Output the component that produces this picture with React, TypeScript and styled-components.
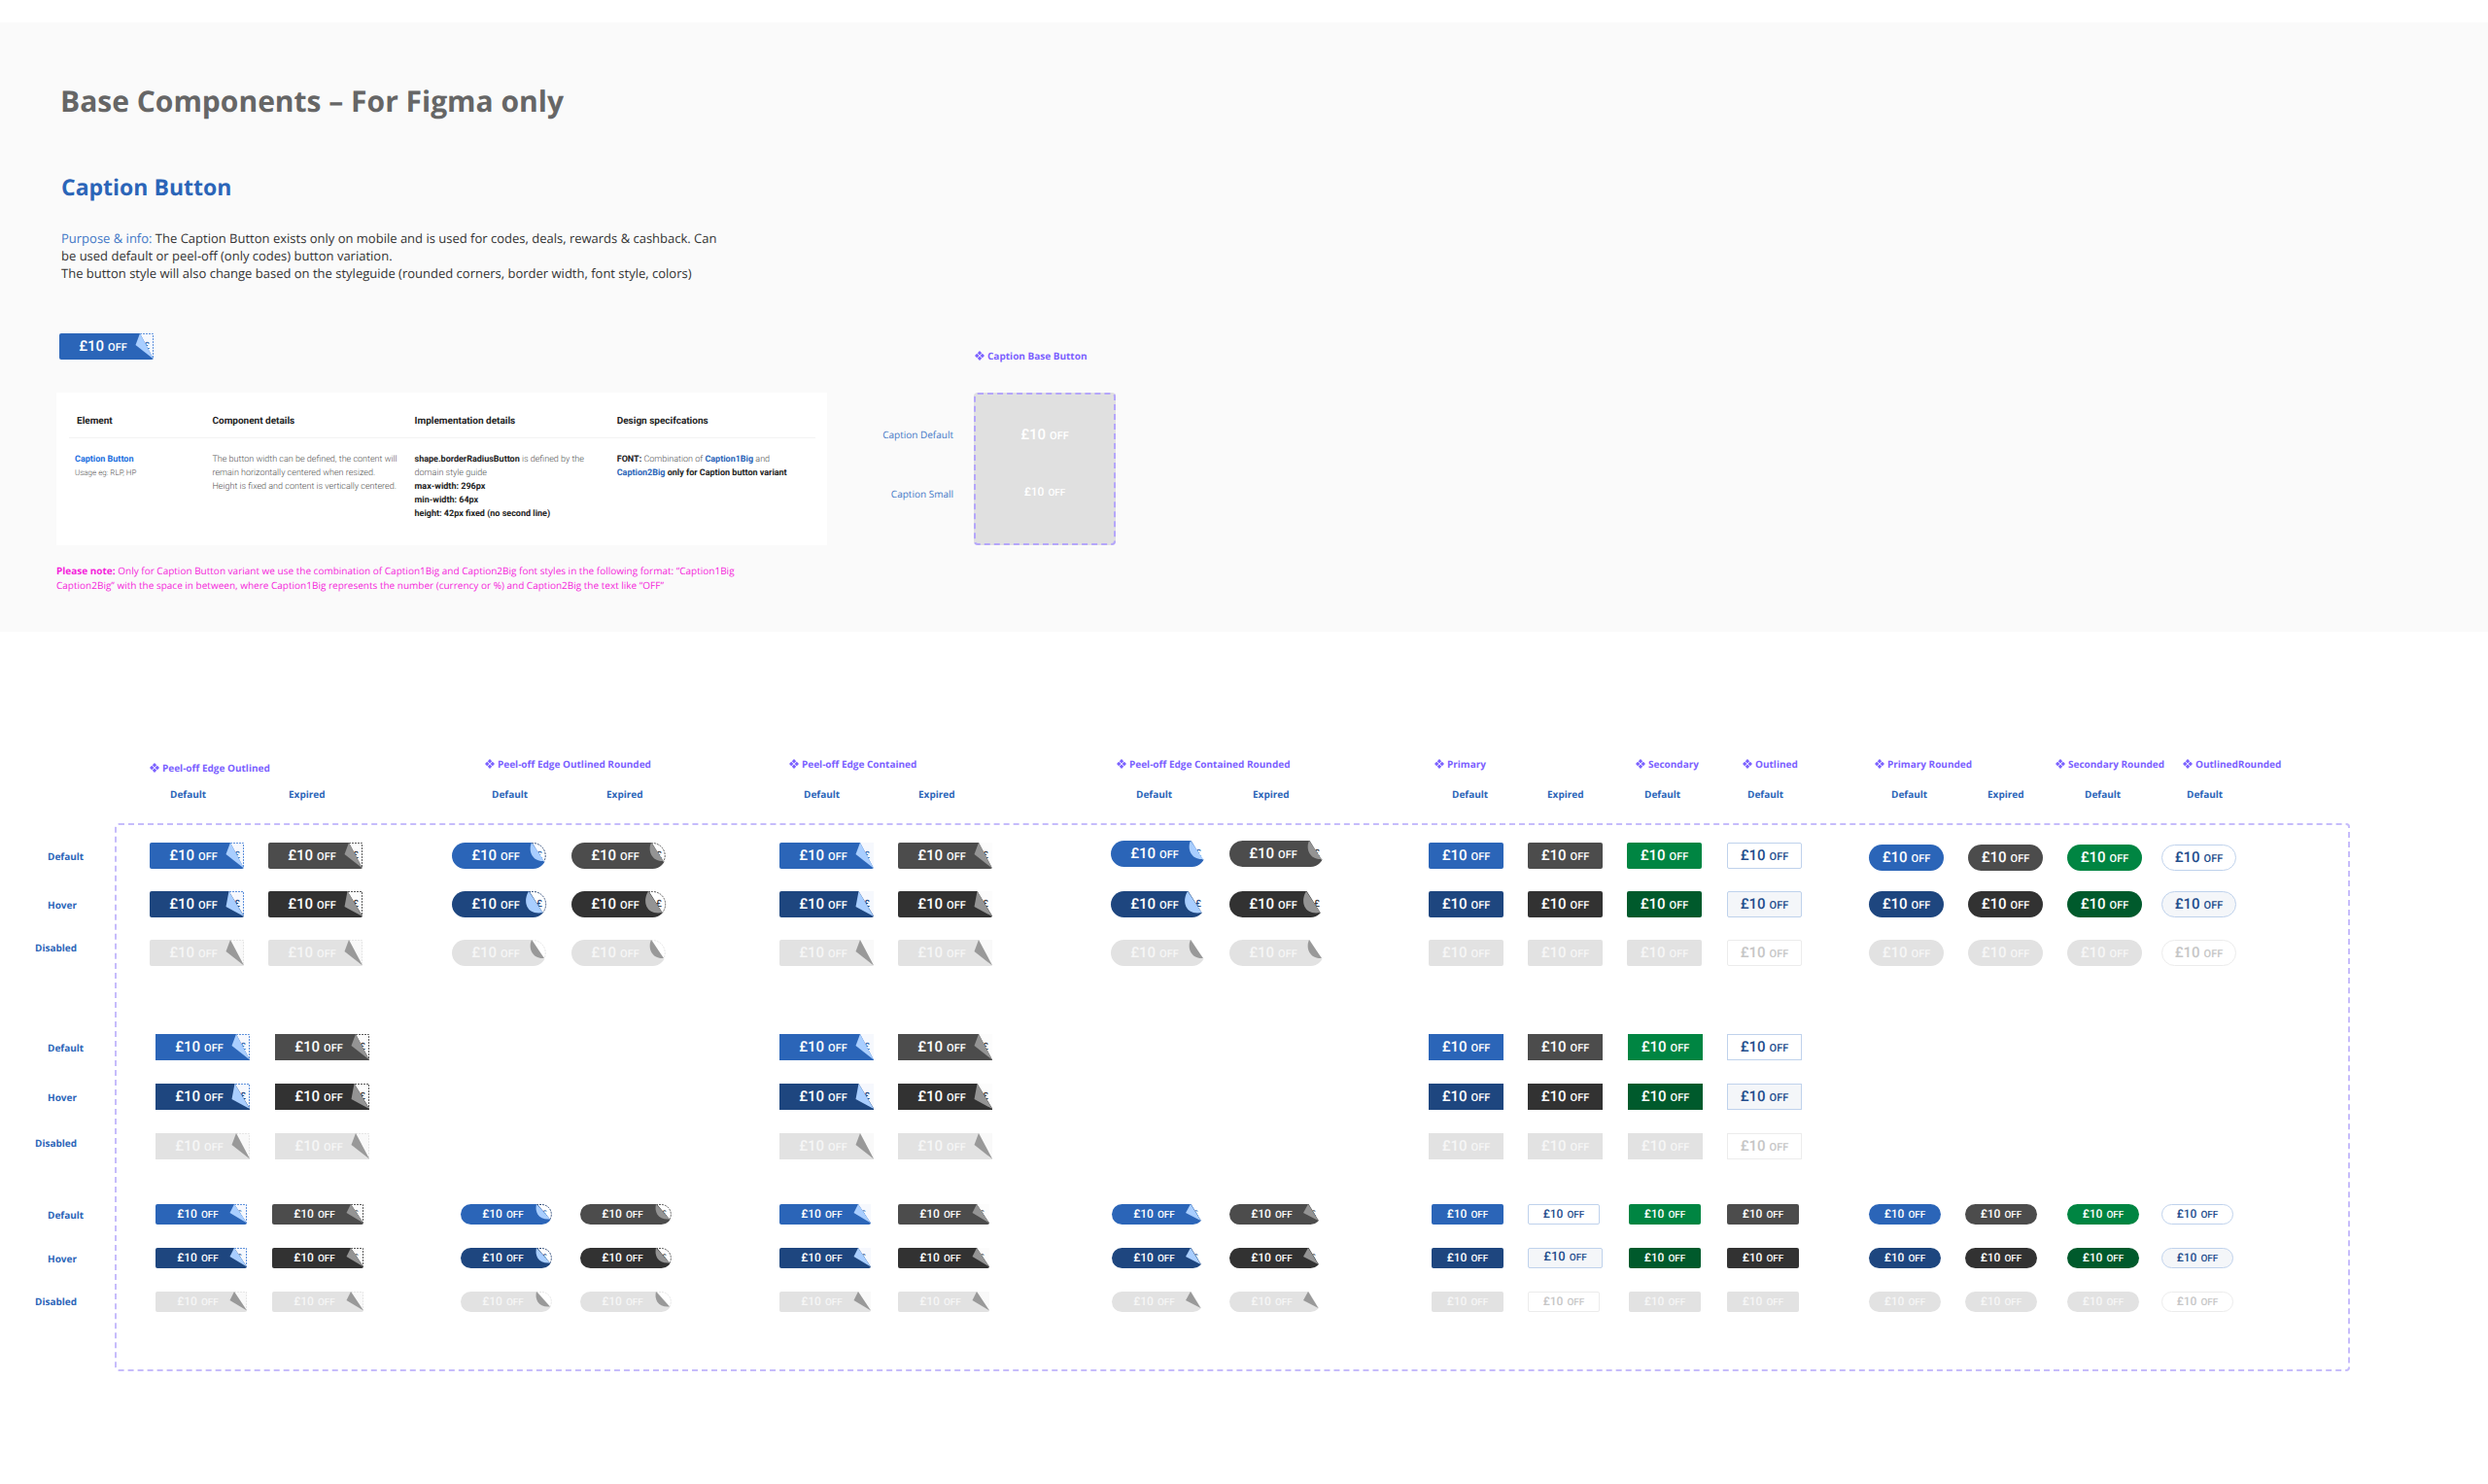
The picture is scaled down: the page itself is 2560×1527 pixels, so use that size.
import React from "react";
import styled, { createGlobalStyle, css } from "styled-components";

const GlobalStyle = createGlobalStyle`
  * { box-sizing: border-box; }
  body {
    margin: 0;
    background: #ffffff;
    font-family: "Open Sans", "Noto Sans", sans-serif;
    color: #333333;
    text-rendering: geometricPrecision;
  }
  h1, h2, h3, p { margin: 0; }
`;

const color = {
  blue: "#2b65b8",
  purple: "#7b61ff",
  magenta: "#f51fdb",
};

type State = "default" | "hover" | "disabled";
type Tone = "blue" | "gray" | "green" | "outline";
type Size = "large" | "medium" | "small";
type Shape = "soft" | "square" | "pill";
type Peel = "none" | "outlined" | "contained";

/* ---------- Caption button ---------- */

const fills: Record<Tone, Record<State, string>> = {
  blue: { default: "#2b65b8", hover: "#1e467f", disabled: "#e2e2e2" },
  gray: { default: "#4c4c4c", hover: "#323232", disabled: "#e2e2e2" },
  green: { default: "#008542", hover: "#005a2c", disabled: "#e2e2e2" },
  outline: { default: "#ffffff", hover: "#f4f6f9", disabled: "#ffffff" },
};

const radii: Record<Shape, string> = { soft: "2px", square: "0", pill: "14px" };

const ButtonBox = styled.button<{
  $tone: Tone;
  $state: State;
  $size: Size;
  $shape: Shape;
  $peeled: boolean;
}>`
  position: relative;
  display: inline-flex;
  flex: none;
  align-items: center;
  justify-content: center;
  width: ${(p) => (p.$size === "small" ? (p.$peeled ? 94 : 74) : p.$peeled ? 97 : 77)}px;
  height: ${(p) => (p.$size === "large" ? 27 : 21)}px;
  padding: 0 ${(p) => (p.$peeled ? 7 : 0)}px 0 0;
  border: ${(p) => (p.$tone === "outline" ? "1px solid" : "0")};
  border-color: ${(p) => (p.$state === "disabled" ? "#ececec" : "#bfd2ec")};
  border-radius: ${(p) => radii[p.$shape]};
  background: ${(p) => fills[p.$tone][p.$state]};
  color: ${(p) =>
    p.$tone === "outline"
      ? p.$state === "disabled"
        ? "#c6c6c6"
        : "#234d8c"
      : p.$state === "disabled"
        ? "#f6f6f6"
        : "#ffffff"};
  font-family: Roboto, sans-serif;
  text-rendering: inherit;
  white-space: pre;
  cursor: ${(p) => (p.$state === "disabled" ? "default" : "pointer")};
`;

const Caption = styled.span<{ $size: Size }>`
  font-size: ${(p) => ({ large: 11, medium: 10, small: 10 })[p.$size]}px;
  font-weight: 500;
  line-height: 20px;
`;

const Amount = styled.span<{ $size: Size }>`
  margin-right: 4px;
  font-size: ${(p) => ({ large: 15, medium: 13, small: 12 })[p.$size]}px;
`;

const PeelArt = styled.svg`
  position: absolute;
  top: 0;
  left: 0;
  overflow: visible;
`;

interface Fold {
  reveal: string;
  edge: string;
  flap: string;
}

function foldFor(size: Size, shape: Shape, state: State, peel: Peel): Fold {
  const hover = state === "hover";
  if (size !== "large") {
    if (shape !== "pill") {
      return {
        reveal: "M81 0H94V19.5Z",
        edge: "M81 .5H93.5V19",
        flap: "M81 0L76.5 9L94 19.5Z",
      };
    }
    if (peel === "contained") {
      return {
        reveal: "M81 -1H95V16.5H91.5Z",
        edge: "",
        flap: "M81 0L76 9L91.5 17Z",
      };
    }
    return {
      reveal: "M78 -1H95V15.5H92Z",
      edge: "M78 .5H83.5A10 10 0 0 1 92 15.5",
      flap: "M78 0C76 8 80 16.5 92 15.5Z",
    };
  }
  if (shape === "pill") {
    return hover
      ? {
          reveal: "M79 -1H98V22H93.5Z",
          edge: "M79 .5H83.5A13 13 0 0 1 93.5 22",
          flap: "M79 0C72 12 78 25 93.5 22Z",
        }
      : {
          reveal: "M82 -1H98V19.5H94.5Z",
          edge: "M82 .5H83.5A13 13 0 0 1 95 19",
          flap: "M82 0C78 9 83 20 95 19Z",
        };
  }
  return hover
    ? {
        reveal: "M81.5 0H97V25.5Z",
        edge: "M82 .5H96.5V25",
        flap: "M81.5 0L78.5 16L97 26Z",
      }
    : {
        reveal: "M83 0H97V26.5Z",
        edge: "M83 .5H96.5V26",
        flap: "M83 0L78.5 12L97 26.5Z",
      };
}

function PeelCorner(props: { size: Size; shape: Shape; state: State; peel: Peel; tone: Tone }) {
  const { size, shape, state, peel, tone } = props;
  const large = size === "large";
  const w = large ? 97 : 94;
  const h = large ? 27 : 21;
  const fold = foldFor(size, shape, state, peel);
  const disabled = state === "disabled";
  const gray = tone === "gray";
  const paper = shape === "pill" ? "#ffffff" : disabled ? "#f9f9f9" : gray ? "#fcfcfc" : "#f6f8fd";
  const ink = gray ? "#3c3c3c" : state === "hover" ? "#1e467f" : "#3d6cb0";
  const edge = disabled ? "#e6e6e6" : gray ? "#5c5c5c" : shape === "pill" ? "#35507c" : "#5f92dc";
  const flap = disabled ? "#999999" : gray ? "#949494" : "#a9ceff";
  return (
    <PeelArt width={w} height={h} viewBox={`0 0 ${w} ${h}`} aria-hidden="true">
      <path d={fold.reveal} fill={paper} />
      {!disabled && (
        <text
          x={large ? 87 : 84}
          y={large ? 16 : 12}
          fontSize={large ? 10 : 8}
          fontWeight={500}
          fill={ink}
        >
          £
        </text>
      )}
      {peel === "outlined" && (
        <path d={fold.edge} fill="none" stroke={edge} strokeWidth="1" strokeDasharray="2 1" />
      )}
      <path d={fold.flap} fill={flap} />
    </PeelArt>
  );
}

interface CaptionButtonProps {
  tone: Tone;
  state?: State;
  size?: Size;
  shape?: Shape;
  peel?: Peel;
}

function CaptionButton({
  tone,
  state = "default",
  size = "large",
  shape = "soft",
  peel = "none",
}: CaptionButtonProps) {
  return (
    <ButtonBox
      type="button"
      disabled={state === "disabled"}
      $tone={tone}
      $state={state}
      $size={size}
      $shape={shape}
      $peeled={peel !== "none"}
    >
      <Caption $size={size}>
        <Amount $size={size}>£10</Amount>OFF
      </Caption>
      {peel !== "none" && (
        <PeelCorner size={size} shape={shape} state={state} peel={peel} tone={tone} />
      )}
    </ButtonBox>
  );
}

/* ---------- Component heading ---------- */

const HeadingRow = styled.h3<{ $low?: boolean }>`
  display: flex;
  align-items: center;
  align-self: ${(p) => (p.$low ? "end" : "start")};
  gap: 3px;
  color: ${color.purple};
  font-size: 10px;
  font-weight: 700;
  line-height: 20px;
  white-space: nowrap;
`;

const Diamonds = styled.svg`
  flex: none;
`;

function ComponentHeading({ children, low }: { children: string; low?: boolean }) {
  return (
    <HeadingRow $low={low}>
      <Diamonds width="10" height="10" viewBox="0 0 10 10" fill={color.purple} aria-hidden="true">
        <path d="M5 0L7.2 2.2L5 4.4L2.8 2.2ZM5 5.6L7.2 7.8L5 10L2.8 7.8ZM0 5L2.2 2.8L4.4 5L2.2 7.2ZM5.6 5L7.8 2.8L10 5L7.8 7.2Z" />
      </Diamonds>
      {children}
    </HeadingRow>
  );
}

/* ---------- Intro ---------- */

const Intro = styled.section`
  margin-top: 23px;
  padding: 61px 58px 40px;
  background: #fafafa;
`;

const Title = styled.h1`
  padding-left: 4px;
  color: #666666;
  font-size: 30px;
  line-height: 40px;
`;

const Subtitle = styled.h2`
  margin-top: 52px;
  padding-left: 5px;
  color: ${color.blue};
  font-size: 23px;
  line-height: 32px;
`;

const Purpose = styled.p`
  max-width: 684px;
  margin-top: 28px;
  padding-left: 5px;
  font-size: 13px;
  line-height: 18px;
`;

const Lead = styled.span`
  color: #4378c6;
`;

const Spec = styled.div`
  display: grid;
  grid-template-columns: minmax(0, 793px) 130px 146px;
  grid-template-rows: 61px auto;
  margin-top: 53px;
`;

const Sample = styled.div`
  grid-column: 1;
  padding-left: 3px;
`;

const SampleHeading = styled.div`
  grid-column: 3;
  padding: 13px 0 0 22px;
`;

const Card = styled.div`
  grid-column: 1;
  padding: 0 12px 0 13px;
  min-height: 157px;
  background: #ffffff;
`;

const DetailTable = styled.table`
  width: 100%;
  border-collapse: collapse;
  table-layout: fixed;
  font-family: Roboto, sans-serif;
  text-align: left;
`;

const Col = styled.col<{ $share: number }>`
  width: ${(p) => p.$share}%;
`;

const HeadCell = styled.th<{ $first?: boolean }>`
  padding: 22px 0 8px ${(p) => (p.$first ? 8 : 0)}px;
  border-bottom: 1px solid #f3f3f3;
  color: #222222;
  font-size: 10px;
  font-weight: 700;
  line-height: 16px;
`;

const BodyCell = styled.td<{ $first?: boolean }>`
  padding: 15px 0 0 ${(p) => (p.$first ? 6 : 0)}px;
  color: #555555;
  font-size: 9px;
  font-weight: 300;
  line-height: 14px;
  vertical-align: top;
  white-space: nowrap;
`;

const Usage = styled.small`
  font-size: 8px;
`;

const Strong = styled.b`
  color: #222222;
  font-weight: 700;
`;

const StyleLink = styled.a<{ $bright?: boolean }>`
  color: ${(p) => (p.$bright ? "#1b6fe0" : color.blue)};
  font-weight: 700;
  text-decoration: none;
`;

const BaseLabels = styled.div`
  display: flex;
  flex-direction: column;
  align-items: flex-end;
  gap: 45px;
  padding-top: 35px;
  color: #4378c6;
  font-size: 10px;
  line-height: 16px;
`;

const BaseBox = styled.div`
  display: flex;
  flex-direction: column;
  align-items: center;
  gap: 37px;
  margin-left: 21px;
  width: 146px;
  padding-top: 31px;
  border: 2px dashed #b5a6fa;
  border-radius: 4px;
  background: #e0e0e0;
  color: #ffffff;
  font-family: Roboto, sans-serif;
`;

const Note = styled.p`
  max-width: 740px;
  margin-top: 19px;
  color: ${color.magenta};
  font-size: 10px;
  line-height: 15px;
`;

function IntroSection() {
  return (
    <Intro>
      <Title>Base Components – For Figma only</Title>
      <Subtitle>Caption Button</Subtitle>
      <Purpose>
        <Lead>Purpose &amp; info:</Lead> The Caption Button exists only on mobile and is used for
        codes, deals, rewards &amp; cashback. Can be used default or peel-off (only codes) button
        variation.
        <br />
        The button style will also change based on the styleguide (rounded corners, border width,
        font style, colors)
      </Purpose>
      <Spec>
        <Sample>
          <CaptionButton tone="blue" peel="outlined" />
        </Sample>
        <SampleHeading>
          <ComponentHeading>Caption Base Button</ComponentHeading>
        </SampleHeading>
        <Card>
          <DetailTable>
            <colgroup>
              <Col $share={19.2} />
              <Col $share={27.1} />
              <Col $share={27.1} />
              <Col $share={26.6} />
            </colgroup>
            <thead>
              <tr>
                <HeadCell $first>Element</HeadCell>
                <HeadCell>Component details</HeadCell>
                <HeadCell>Implementation details</HeadCell>
                <HeadCell>Design specifcations</HeadCell>
              </tr>
            </thead>
            <tbody>
              <tr>
                <BodyCell $first>
                  <StyleLink $bright href="#caption-button">
                    Caption Button
                  </StyleLink>
                  <br />
                  <Usage>Usage eg: RLP, HP</Usage>
                </BodyCell>
                <BodyCell>
                  The button width can be defined, the content will
                  <br />
                  remain horizontally centered when resized.
                  <br />
                  Height is fixed and content is vertically centered.
                </BodyCell>
                <BodyCell>
                  <Strong>shape.borderRadiusButton</Strong> is defined by the
                  <br />
                  domain style guide
                  <br />
                  <Strong>max-width: 296px</Strong>
                  <br />
                  <Strong>min-width: 64px</Strong>
                  <br />
                  <Strong>height: 42px fixed (no second line)</Strong>
                </BodyCell>
                <BodyCell>
                  <Strong>FONT:</Strong> Combination of{" "}
                  <StyleLink href="#caption1big">Caption1Big</StyleLink> and
                  <br />
                  <StyleLink href="#caption2big">Caption2Big</StyleLink>{" "}
                  <Strong>only for Caption button variant</Strong>
                </BodyCell>
              </tr>
            </tbody>
          </DetailTable>
        </Card>
        <BaseLabels>
          <span>Caption Default</span>
          <span>Caption Small</span>
        </BaseLabels>
        <BaseBox>
          <Caption $size="large">
            <Amount $size="large">£10</Amount>OFF
          </Caption>
          <Caption $size="small">
            <Amount $size="small">£10</Amount>OFF
          </Caption>
        </BaseBox>
      </Spec>
      <Note>
        <b>Please note:</b> Only for Caption Button variant we use the combination of Caption1Big
        and Caption2Big font styles in the following format: “Caption1Big Caption2Big” with the
        space in between, where Caption1Big represents the number (currency or %) and Caption2Big
        the text like “OFF”
      </Note>
    </Intro>
  );
}

/* ---------- Variant board ---------- */

const FRAME_UNITS = 2296;

/* Turns column starts, in units of the frame width, into proportional tracks. */
function tracks(starts: number[]) {
  const stops = [0, ...starts, FRAME_UNITS];
  return stops
    .slice(1)
    .map((stop, i) => `minmax(0, ${stop - stops[i]}fr)`)
    .join(" ");
}

const Board = styled.section`
  display: grid;
  grid-template-columns: 118px minmax(0, 1fr);
  padding: 126px 142px 80px 0;
`;

const Headings = styled.div`
  grid-column: 2;
  padding: 0 2px;
`;

const TrackRow = styled.div<{ $starts: number[]; $height: number; $below: number }>`
  display: grid;
  grid-template-columns: ${(p) => tracks(p.$starts)};
  min-height: ${(p) => p.$height}px;
  margin-bottom: ${(p) => p.$below}px;
  & > :first-child {
    grid-column-start: 2;
  }
`;

const labelText = css`
  color: ${color.blue};
  font-size: 10px;
  font-weight: 700;
`;

const ColumnLabel = styled.span`
  ${labelText}
  line-height: 16px;
`;

const Labels = styled.div`
  grid-column: 1;
  padding-top: 18px;
`;

const Frame = styled.div`
  grid-column: 2;
  padding: 16px 0 59px;
  border: 2px dashed #c6bcfb;
  border-radius: 4px;
`;

const Block = styled.div<{ $rows: string; $gap: number; $below: number }>`
  display: grid;
  grid-template-rows: ${(p) => p.$rows};
  row-gap: ${(p) => p.$gap}px;
  margin-bottom: ${(p) => p.$below}px;
`;

const StateLabel = styled.span<{ $outdent?: boolean }>`
  ${labelText}
  align-self: ${(p) => (p.$outdent ? "start" : "center")};
  padding-left: ${(p) => (p.$outdent ? 36 : 49)}px;
  line-height: 20px;
`;

const ButtonRow = styled.div<{ $starts: number[] }>`
  display: grid;
  grid-template-columns: ${(p) => tracks(p.$starts)};
`;

const Cell = styled.div<{ $column: number; $align: string }>`
  display: flex;
  grid-column: ${(p) => p.$column};
  align-self: ${(p) => p.$align};
`;

interface Variant {
  tone: Tone;
  peel: Peel;
  pill: boolean;
  align: string;
}

const v = (tone: Tone, peel: Peel, pill: boolean, align = "center"): Variant => ({
  tone,
  peel,
  pill,
  align,
});

const variants: Variant[] = [
  v("blue", "outlined", false),
  v("gray", "outlined", false),
  v("blue", "outlined", true),
  v("gray", "outlined", true),
  v("blue", "contained", false),
  v("gray", "contained", false),
  v("blue", "contained", true, "start"),
  v("gray", "contained", true, "start"),
  v("blue", "none", false),
  v("gray", "none", false),
  v("green", "none", false),
  v("outline", "none", false),
  v("blue", "none", true, "end"),
  v("gray", "none", true, "end"),
  v("green", "none", true, "end"),
  v("outline", "none", true, "end"),
];

/* In the small set the outlined and expired buttons trade places. */
const smallVariants = variants.map((item, i) =>
  i === 9 ? variants[11] : i === 11 ? variants[9] : item
);

const blocks = [
  {
    id: "rounded-corners",
    rows: "31px 27px 31px",
    gap: 21,
    below: 68,
    size: "large" as Size,
    square: false,
    variants,
    starts: [34, 156, 345, 468, 682, 804, 1023, 1145, 1350, 1452, 1554, 1657, 1803, 1905, 2007, 2104],
  },
  {
    id: "square-corners",
    rows: "27px 27px 27px",
    gap: 24,
    below: 46,
    size: "large" as Size,
    square: true,
    variants,
    starts: [40, 163, 345, 468, 682, 804, 1023, 1145, 1350, 1452, 1555, 1657, 1803, 1905, 2007, 2104],
  },
  {
    id: "small",
    rows: "21px 21px 21px",
    gap: 24,
    below: 0,
    size: "small" as Size,
    square: false,
    variants: smallVariants,
    starts: [40, 160, 354, 477, 682, 804, 1024, 1145, 1353, 1452, 1556, 1657, 1803, 1902, 2007, 2104],
  },
];

const states: State[] = ["default", "hover", "disabled"];
const stateNames: Record<State, string> = {
  default: "Default",
  hover: "Hover",
  disabled: "Disabled",
};

const headings = [
  "Peel-off Edge Outlined",
  "Peel-off Edge Outlined Rounded",
  "Peel-off Edge Contained",
  "Peel-off Edge Contained Rounded",
  "Primary",
  "Secondary",
  "Outlined",
  "Primary Rounded",
  "Secondary Rounded",
  "OutlinedRounded",
];
const headingStarts = [34, 379, 692, 1029, 1356, 1563, 1673, 1809, 1995, 2126];

const columnNames = [
  "Default", "Expired", "Default", "Expired", "Default", "Expired", "Default", "Expired",
  "Default", "Expired", "Default", "Default", "Default", "Expired", "Default", "Default",
];
const columnStarts = [
  55, 177, 386, 504, 707, 825, 1049, 1169, 1374, 1472, 1572, 1678, 1826, 1925, 2025, 2130,
];

function VariantBoard() {
  return (
    <Board>
      <Headings>
        <TrackRow $starts={headingStarts} $height={24} $below={9}>
          {headings.map((name, i) => (
            <ComponentHeading key={name} low={i === 0}>
              {name}
            </ComponentHeading>
          ))}
        </TrackRow>
        <TrackRow $starts={columnStarts} $height={16} $below={22}>
          {columnNames.map((name, i) => (
            <ColumnLabel key={i}>{name}</ColumnLabel>
          ))}
        </TrackRow>
      </Headings>
      <Labels>
        {blocks.map((block) => (
          <Block key={block.id} $rows={block.rows} $gap={block.gap} $below={block.below}>
            {states.map((state) => (
              <StateLabel key={state} $outdent={state === "disabled"}>
                {stateNames[state]}
              </StateLabel>
            ))}
          </Block>
        ))}
      </Labels>
      <Frame>
        {blocks.map((block) => (
          <Block key={block.id} $rows={block.rows} $gap={block.gap} $below={block.below}>
            {states.map((state) => (
              <ButtonRow key={state} $starts={block.starts}>
                {block.variants.map((item, i) =>
                  block.square && item.pill ? null : (
                    <Cell
                      key={i}
                      $column={i + 2}
                      $align={state === "default" ? item.align : "center"}
                    >
                      <CaptionButton
                        tone={item.tone}
                        state={state}
                        peel={item.peel}
                        shape={item.pill ? "pill" : block.square ? "square" : "soft"}
                        size={
                          block.size === "small" &&
                          state === "hover" &&
                          item.tone === "outline" &&
                          !item.pill
                            ? "medium"
                            : block.size
                        }
                      />
                    </Cell>
                  )
                )}
              </ButtonRow>
            ))}
          </Block>
        ))}
      </Frame>
    </Board>
  );
}

export default function App() {
  return (
    <>
      <GlobalStyle />
      <main>
        <IntroSection />
        <VariantBoard />
      </main>
    </>
  );
}
